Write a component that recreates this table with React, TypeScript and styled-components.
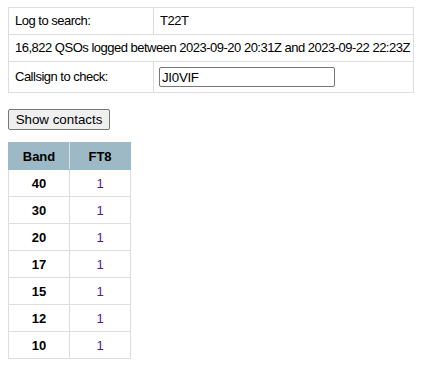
import React from 'react';
import styled, { createGlobalStyle } from 'styled-components';

const BANDS = ['40', '30', '20', '17', '15', '12', '10'];

const GlobalStyle = createGlobalStyle`
  body {
    margin: 7px 8px;
    background: #fff;
    font-family: "Liberation Sans", Arial, sans-serif;
    font-size: 13px;
    color: #000;
  }
`;

export default function App() {
  return (
    <>
      <GlobalStyle />
      <LogTable>
        <colgroup>
          <col style={{ width: 145 }} />
          <col />
        </colgroup>
        <tbody>
          <tr>
            <Cell>Log to search:</Cell>
            <Cell>T22T</Cell>
          </tr>
          <tr>
            <Cell colSpan={2}>
              16,822 QSOs logged between 2023-09-20 20:31Z and 2023-09-22 22:23Z
            </Cell>
          </tr>
          <tr>
            <Cell>Callsign to check:</Cell>
            <Cell>
              <CallInput defaultValue="JI0VIF" />
            </Cell>
          </tr>
        </tbody>
      </LogTable>

      <ShowButton>Show contacts</ShowButton>

      <BandTable>
        <thead>
          <tr>
            <HeadCell>Band</HeadCell>
            <HeadCell>FT8</HeadCell>
          </tr>
        </thead>
        <tbody>
          {BANDS.map((band) => (
            <tr key={band}>
              <BandCell>{band}</BandCell>
              <CountCell>
                <CountLink href="#">1</CountLink>
              </CountCell>
            </tr>
          ))}
        </tbody>
      </BandTable>
    </>
  );
}

/* ----------------- search form ----------------- */

const LogTable = styled.table`
  border-collapse: collapse;
  table-layout: fixed;
  width: 406px;
`;

const Cell = styled.td`
  border: 1px solid #dddddd;
  padding: 5px 5px 5px 6px;
  line-height: 16px;
  letter-spacing: -0.5px;
  white-space: nowrap;
  vertical-align: middle;
`;

const CallInput = styled.input`
  box-sizing: border-box;
  width: 176px;
  height: 20px;
  margin: 0 0 0 -1px;
  padding: 1px 2px;
  border: 1px solid #767676;
  border-radius: 2px;
  font-family: "Liberation Sans", Arial, sans-serif;
  font-size: 13.33px;
  letter-spacing: -0.3px;
  vertical-align: middle;
`;

const ShowButton = styled.button`
  display: block;
  margin: 16px 0 12px;
  width: 102px;
  height: 21px;
  padding: 1px 6px;
  border: 1px solid #767676;
  border-radius: 2px;
  background: #efefef;
  font-family: "Liberation Sans", Arial, sans-serif;
  font-size: 13.33px;
  color: #000;
`;

/* ----------------- band table ----------------- */

const BandTable = styled.table`
  border-collapse: collapse;
  table-layout: fixed;
  width: 123px;
`;

const HeadCell = styled.th`
  background: #9cb9c5;
  border: 1px solid #9cb9c5;
  border-right-color: #dddddd;
  height: 26px;
  padding: 0;
  font-weight: bold;
  text-align: center;
  &:last-child {
    border-right-color: #9cb9c5;
  }
`;

const BandCell = styled.td`
  border: 1px solid #dddddd;
  height: 26px;
  padding: 0;
  font-weight: bold;
  text-align: center;
`;

const CountCell = styled(BandCell)`
  font-weight: normal;
`;

const CountLink = styled.a`
  color: #551a8b;
  text-decoration: none;
`;
